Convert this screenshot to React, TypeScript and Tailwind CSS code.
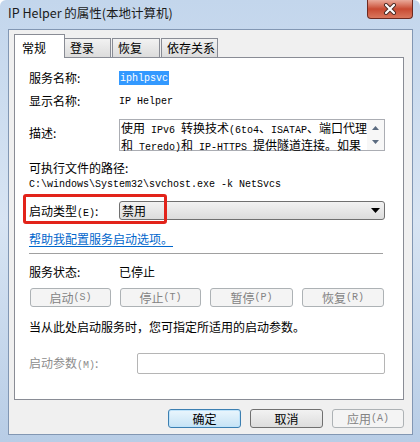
const cjk = "font-['Noto_Sans_CJK_SC',sans-serif]";
const mono = "font-['Liberation_Mono','Noto_Sans_CJK_SC',monospace] text-[10px]";

function M({ children }: { children: React.ReactNode }) {
  return <span className={mono}>{children}</span>;
}

function Btn({ label, disabled, focused, w = "w-[81px]" }: { label: React.ReactNode; disabled?: boolean; focused?: boolean; w?: string }) {
  return (
    <div
      className={`${w} h-[19px] rounded-[3px] border flex items-center justify-center text-[12px] leading-none ${
        focused
          ? "border-[#3c7fb1] bg-gradient-to-b from-[#eaf6fd] to-[#c6e3f5] text-black shadow-[inset_0_0_0_1px_#bfe3fa]"
          : disabled
          ? "border-[#adb2b5] bg-[#f4f4f4] text-[#838383]"
          : "border-[#707070] bg-gradient-to-b from-[#f2f2f2] to-[#dddddd] text-black"
      }`}
    >
      {label}
    </div>
  );
}

export default function App() {
  return (
    <div className={`w-[420px] h-[442px] flex flex-col bg-gradient-to-b from-[#c3d6ec] via-[#d7e4f3] to-[#b8cde6] rounded-t-[6px] overflow-hidden ${cjk}`}>
      {/* Title bar */}
      <div className="h-[29px] flex items-start justify-between relative">
        <span className="ml-[8px] mt-[5px] text-[12.5px] leading-[16px] text-[#1a1a1a]">IP Helper 的属性(本地计算机)</span>
        <div className="mr-[7px] w-[46px] h-[19px] rounded-b-[4px] border border-t-0 border-[#6d2a20] bg-gradient-to-b from-[#e9a99a] via-[#c84a32] to-[#d9765c] flex items-center justify-center">
          <svg width="14" height="12" viewBox="0 0 14 12">
            <path d="M3 2 L11 10 M11 2 L3 10" stroke="#4a2a24" strokeWidth="4" strokeLinecap="round" />
            <path d="M3 2 L11 10 M11 2 L3 10" stroke="#ffffff" strokeWidth="2.2" strokeLinecap="round" />
          </svg>
        </div>
      </div>

      {/* Client area */}
      <div className="ml-[8px] mr-[7px] mb-[7px] flex-1 bg-[#f0f0f0] border border-[#8297b3] flex flex-col pl-[5px] pr-[8px]">
        {/* Tabs */}
        <div className="flex items-end h-[26px] mt-[1px] text-[12px]">
          <div className="w-[51px] h-[24px] bg-white border border-b-0 border-[#898c95] flex items-start pt-[4px] pl-[7px] relative z-10 -mb-px">常规</div>
          <div className="w-[46px] h-[19px] bg-gradient-to-b from-[#f2f2f2] to-[#dcdcdc] border border-b-0 border-l-0 border-[#898c95] pl-[5px] leading-[18px]">登录</div>
          <div className="w-[48px] h-[19px] ml-[1px] bg-gradient-to-b from-[#f2f2f2] to-[#dcdcdc] border border-b-0 border-[#898c95] pl-[5px] leading-[18px]">恢复</div>
          <div className="w-[57px] h-[19px] ml-[1px] bg-gradient-to-b from-[#f2f2f2] to-[#dcdcdc] border border-b-0 border-[#898c95] pl-[5px] leading-[18px]">依存关系</div>
        </div>

        {/* Tab panel */}
        <div className="relative h-[343px] bg-white border border-[#898c95] pl-[14px] pr-[18px] text-[12px] text-black flex flex-col">
          <div className="flex items-center h-[14px] mt-[13px]">
            <span className="w-[90px]">服务名称:</span>
            <span className="bg-[#3399ff] text-white px-[1px] h-[14px] flex items-center"><M>iphlpsvc</M></span>
          </div>
          <div className="flex items-center h-[14px] mt-[9px]">
            <span className="w-[90px]">显示名称:</span>
            <M>IP Helper</M>
          </div>
          <div className="flex items-start mt-[11px]">
            <span className="w-[90px] mt-[5px]">描述:</span>
            <div className="flex-1 h-[32px] border border-[#abadb3] flex">
              <div className="flex-1 pl-[1px] pt-[1px] leading-[14px] text-[12px] whitespace-pre">
                <div>使用<M> IPv6 </M>转换技术<M>(6to4</M>、<M>ISATAP</M>、端口代理</div>
                <div>和<M> Teredo)</M>和<M> IP-HTTPS </M>提供隧道连接。如果</div>
              </div>
              <div className="w-[17px] flex flex-col items-center justify-between py-[6px] bg-[#f7f7f7]">
                <svg width="7" height="4" viewBox="0 0 7 4"><path d="M0 4 L3.5 0 L7 4 Z" fill="#5b6b80" /></svg>
                <svg width="7" height="4" viewBox="0 0 7 4"><path d="M0 0 L3.5 4 L7 0 Z" fill="#5b6b80" /></svg>
              </div>
            </div>
          </div>
          <div className="h-[14px] mt-[10px] flex items-center">可执行文件的路径:</div>
          <div className="h-[14px] mt-[2px] flex items-center"><M>C:\windows\System32\svchost.exe -k NetSvcs</M></div>
          <div className="flex items-center mt-[10px] h-[19px]">
            <span className="w-[90px] mt-[2px]">启动类型<M>(E)</M>:</span>
            <div className="flex-1 h-[19px] rounded-[3px] border border-[#707070] bg-gradient-to-b from-[#f2f2f2] to-[#dcdcdc] flex items-center justify-between pl-[2px] pr-[4px]">
              <span>禁用</span>
              <svg width="9" height="5" viewBox="0 0 9 5"><path d="M0 0 L9 0 L4.5 5 Z" fill="#000" /></svg>
            </div>
          </div>
          <div className="h-[14px] mt-[12px] flex items-center text-[#0066cc] underline underline-offset-2">帮助我配置服务启动选项。</div>
          <div className="h-px bg-[#a0a0a0] mt-[7px] mr-[2px]" />
          <div className="flex items-center h-[14px] mt-[11px]">
            <span className="w-[90px]">服务状态:</span>
            <span>已停止</span>
          </div>
          <div className="flex items-center mt-[9px] gap-[9px] ml-[1px]">
            <Btn disabled label={<>启动<M>(S)</M></>} />
            <Btn disabled label={<>停止<M>(T)</M></>} />
            <Btn disabled w="w-[83px]" label={<>暂停<M>(P)</M></>} />
            <Btn disabled w="w-[82px]" label={<>恢复<M>(R)</M></>} />
          </div>
          <div className="h-[14px] mt-[13px] flex items-center">当从此处启动服务时，您可指定所适用的启动参数。</div>
          <div className="flex items-center mt-[19px]">
            <span className="w-[108px] text-[#8d8d8d]">启动参数<M>(M)</M>:</span>
            <div className="flex-1 h-[21px] border border-[#b5b5b5] rounded-[2px] bg-white" />
          </div>

          {/* red annotation box */}
          <div className="absolute left-[8px] top-[136px] w-[144px] h-[30px] border-[3px] border-[#e2231a] rounded-[3px]" />
        </div>

        {/* Bottom buttons */}
        <div className="flex justify-end gap-[9px] mt-[9px]">
          <Btn focused w="w-[73px]" label="确定" />
          <Btn w="w-[73px]" label="取消" />
          <Btn disabled w="w-[72px]" label={<>应用<M>(A)</M></>} />
        </div>
      </div>
    </div>
  );
}
